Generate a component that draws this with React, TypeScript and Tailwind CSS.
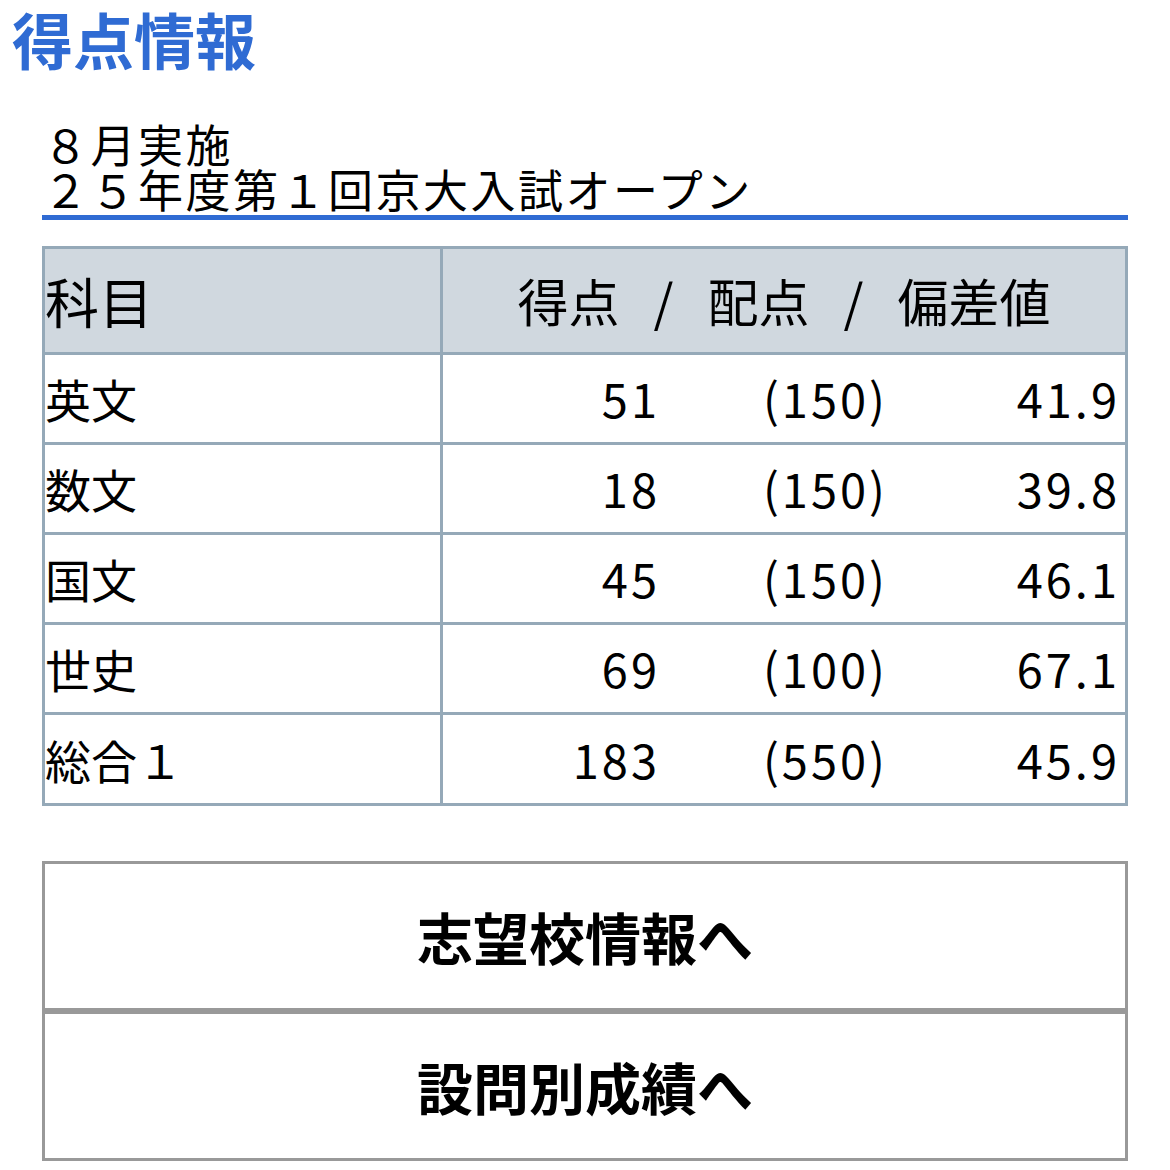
const rows = [
  { subject: "英文", score: "51", full: "(150)", dev: "41.9" },
  { subject: "数文", score: "18", full: "(150)", dev: "39.8" },
  { subject: "国文", score: "45", full: "(150)", dev: "46.1" },
  { subject: "世史", score: "69", full: "(100)", dev: "67.1" },
  { subject: "総合１", score: "183", full: "(550)", dev: "45.9" },
];

const font = "font-['Noto_Sans_CJK_JP','Noto_Sans',sans-serif]";

export default function App() {
  return (
    <div className={`w-[1170px] min-h-[1170px] bg-white text-black ${font}`}>
      <h1 className="pl-[12px] pt-[3px] text-[61px] leading-[72px] font-bold text-[#2f6bd3]">
        得点情報
      </h1>

      <div className="px-[42px]">
        <div className="mt-[46px] border-b-[5px] border-[#2f6bd3] pl-[1px] pb-[4px] text-[45px] leading-[45px] tracking-[2.5px] font-normal">
          <div>８月実施</div>
          <div>２５年度第１回京大入試オープン</div>
        </div>

        <div className="mt-[26px] border-[3px] border-[#95a9b8]">
          <div className="flex h-[106px] bg-[#d0d8df] border-b-[3px] border-[#95a9b8]">
            <div className="w-[398px] border-r-[3px] border-[#95a9b8] flex items-center text-[54px]">
              科目
            </div>
            <div className="flex-1 flex items-center justify-center text-[51px]">
              <span>得点</span>
              <span className="px-[34px]">/</span>
              <span>配点</span>
              <span className="px-[34px]">/</span>
              <span>偏差値</span>
            </div>
          </div>
          {rows.map((r, i) => (
            <div
              key={r.subject}
              className={`flex ${i < rows.length - 1 ? "h-[90px] border-b-[3px] border-[#95a9b8]" : "h-[88px]"}`}
            >
              <div className="w-[398px] border-r-[3px] border-[#95a9b8] flex items-center text-[46px]">
                {r.subject}
              </div>
              <div className="flex-1 flex items-center text-[47px] tracking-[3px]">
                <span className="w-[217px] text-right">{r.score}</span>
                <span className="w-[228px] text-right">{r.full}</span>
                <span className="w-[232px] text-right">{r.dev}</span>
              </div>
            </div>
          ))}
        </div>

        <div className="mt-[55px] flex flex-col">
          <button className="h-[150px] border-[3px] border-[#999999] bg-white text-[56px] font-bold">
            志望校情報へ
          </button>
          <button className="h-[150px] border-[3px] border-[#999999] bg-white text-[56px] font-bold">
            設問別成績へ
          </button>
        </div>
      </div>
    </div>
  );
}
